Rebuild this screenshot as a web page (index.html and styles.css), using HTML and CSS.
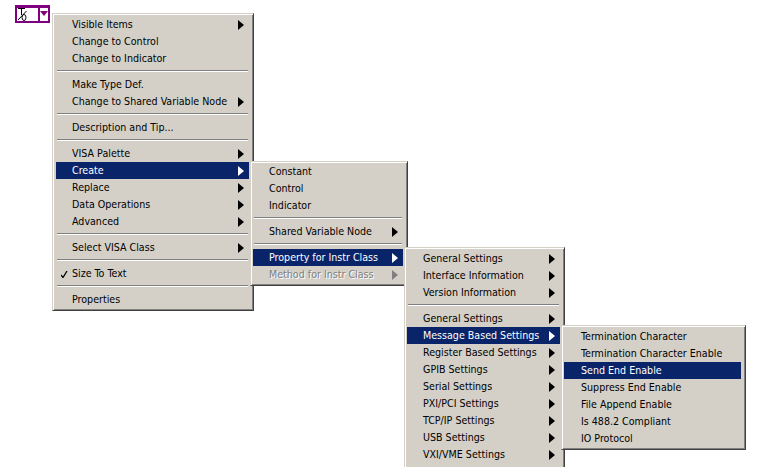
FILE: index.html
```html
<!DOCTYPE html>
<html lang="en">
<head>
<meta charset="utf-8">
<title>Menu</title>
<link rel="stylesheet" href="styles.css">
</head>
<body>
<div class="control">
  <div class="control-text">
    <svg class="io" width="10" height="13" viewBox="0 0 10 13"><path d="M0 .5h7M3.5 .5v6.5M0 12L8.5 3" fill="none" stroke="#000"/><ellipse cx="6" cy="9.5" rx="2" ry="3" fill="none" stroke="#000"/></svg>
  </div>
  <div class="control-btn"><span class="down"></span></div>
</div>

<div class="menu m1">
  <div class="row"><span>Visible Items</span><i class="arr"></i></div>
  <div class="row"><span>Change to Control</span></div>
  <div class="row"><span>Change to Indicator</span></div>
  <hr>
  <div class="row"><span>Make Type Def.</span></div>
  <div class="row"><span>Change to Shared Variable Node</span><i class="arr"></i></div>
  <hr>
  <div class="row"><span>Description and Tip...</span></div>
  <hr>
  <div class="row"><span>VISA Palette</span><i class="arr"></i></div>
  <div class="row sel"><span>Create</span><i class="arr"></i></div>
  <div class="row"><span>Replace</span><i class="arr"></i></div>
  <div class="row"><span>Data Operations</span><i class="arr"></i></div>
  <div class="row"><span>Advanced</span><i class="arr"></i></div>
  <hr>
  <div class="row"><span>Select VISA Class</span><i class="arr"></i></div>
  <hr>
  <div class="row"><svg class="check" width="7" height="7" viewBox="0 0 7 7"><path d="M0 4l2 2.5L6 0" fill="none" stroke="#000" stroke-width="1.3"/></svg><span>Size To Text</span></div>
  <hr>
  <div class="row"><span>Properties</span></div>
</div>

<div class="menu m2">
  <div class="row"><span>Constant</span></div>
  <div class="row"><span>Control</span></div>
  <div class="row"><span>Indicator</span></div>
  <hr>
  <div class="row"><span>Shared Variable Node</span><i class="arr"></i></div>
  <hr>
  <div class="row sel"><span>Property for Instr Class</span><i class="arr"></i></div>
  <div class="row off"><span>Method for Instr Class</span><i class="arr"></i></div>
</div>

<div class="menu m3">
  <div class="row"><span>General Settings</span><i class="arr"></i></div>
  <div class="row"><span>Interface Information</span><i class="arr"></i></div>
  <div class="row"><span>Version Information</span><i class="arr"></i></div>
  <hr>
  <div class="row"><span>General Settings</span><i class="arr"></i></div>
  <div class="row sel"><span>Message Based Settings</span><i class="arr"></i></div>
  <div class="row"><span>Register Based Settings</span><i class="arr"></i></div>
  <div class="row"><span>GPIB Settings</span><i class="arr"></i></div>
  <div class="row"><span>Serial Settings</span><i class="arr"></i></div>
  <div class="row"><span>PXI/PCI Settings</span><i class="arr"></i></div>
  <div class="row"><span>TCP/IP Settings</span><i class="arr"></i></div>
  <div class="row"><span>USB Settings</span><i class="arr"></i></div>
  <div class="row"><span>VXI/VME Settings</span><i class="arr"></i></div>
</div>

<div class="menu m4">
  <div class="row"><span>Termination Character</span></div>
  <div class="row"><span>Termination Character Enable</span></div>
  <div class="row sel"><span>Send End Enable</span></div>
  <div class="row"><span>Suppress End Enable</span></div>
  <div class="row"><span>File Append Enable</span></div>
  <div class="row"><span>Is 488.2 Compliant</span></div>
  <div class="row"><span>IO Protocol</span></div>
</div>
</body>
</html>
```
FILE: styles.css
```css
html, body {
  margin: 0;
  padding: 0;
  height: 467px;
  overflow: hidden;
  background: #fff;
  font-family: "DejaVu Sans", sans-serif;
  font-stretch: condensed;
  font-size: 10.6px;
  color: #000;
}

.control {
  position: absolute;
  left: 15px;
  top: 5px;
  width: 35px;
  height: 18px;
  box-sizing: border-box;
  border: solid #800080;
  border-width: 3px 2px 2px;
  display: flex;
  background: #fff;
}
.control-text {
  flex: 1;
  border-right: 2px solid #800080;
}
.io { display: block; margin: 0 0 0 1px; }
.control-btn {
  width: 8px;
  display: flex;
  align-items: center;
  justify-content: center;
  background: #fff;
}
.down {
  width: 0;
  height: 0;
  margin-top: -2px;
  border-left: 4px solid transparent;
  border-right: 4px solid transparent;
  border-top: 5px solid #800080;
}

.menu {
  position: absolute;
  box-sizing: border-box;
  background: #d4d0c8;
  border: 1px solid;
  border-color: #d4d0c8 #404040 #404040 #d4d0c8;
  box-shadow: inset 1px 1px 0 #fff, inset -1px -1px 0 #808080;
  padding: 2px 4px 1px 2px;
}
.m1 { left: 52px; top: 13px; width: 202px; height: 298px; padding-left: 3px; }
.m2 { left: 250px; top: 161px; width: 158px; height: 125px; padding-top: 1px; }
.m3 { left: 404px; top: 247px; width: 161px; height: 230px; }
.m4 { left: 561px; top: 325px; width: 185px; height: 125px; }
.m4 .row { padding-left: 17px; }

.row {
  position: relative;
  height: 17px;
  display: flex;
  align-items: center;
  padding: 0 5px 0 16px;
  line-height: 17px;
  white-space: nowrap;
}
.row span { flex: 1; }
.sel { background: #0a246a; color: #fff; }
.off { color: #808080; text-shadow: 1px 1px 0 #fff; }

.arr {
  width: 0;
  height: 0;
  border-top: 5px solid transparent;
  border-bottom: 5px solid transparent;
  border-left: 6px solid #000;
}
.sel .arr { border-left-color: #fff; }
.off .arr { border-left-color: #808080; }

.check { position: absolute; left: 5px; top: 6px; }

hr {
  margin: 3px 1px 4px 1px;
  border: 0;
  height: 2px;
  box-sizing: border-box;
  border-top: 1px solid #808080;
  border-bottom: 1px solid #fff;
}
```
